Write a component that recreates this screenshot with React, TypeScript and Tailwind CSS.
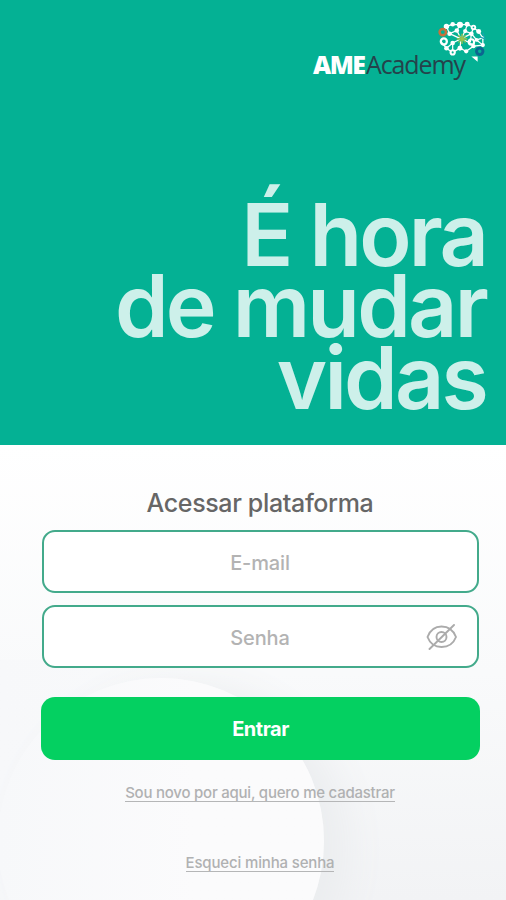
import { useState } from "react";

const dots = [
  [11, 5, 2.6], [17, 3, 2.2], [24, 3.5, 3], [31, 3, 2.4], [37, 6, 2.6], [42, 10, 2.4], [21, 9, 2.2],
  [14, 12, 2.2], [29, 9.5, 2], [35, 12, 2.2], [46, 16, 1.6], [11, 26, 2.2], [17, 30, 3], [17, 21, 2.2],
  [24, 26, 2.4], [30, 29, 2], [37, 24, 2], [46, 23, 2], [40, 18, 1.8],
];

function BrainLogo() {
  return (
    <svg className="absolute left-[134px] top-0 h-[42px] w-[52px]" viewBox="0 0 50 40" fill="none">
      <path
        d="M11 5l6-2 7 .5 7-.5 6 3 5 4 4 6v7l-9 1-7 5-6-3-7 4-6-4-5-6M11 5l3 7 7-3 3-5.500M21 9l4 8 4-7.500 2-6.500M29 9.500l6 2.500 2-6M14 12l11 5-8 4-6 5M35 12l5 6 6-2M25 17l10-5M25 17l-1 9M25 17l9 4 3 3M17 21v9M40 18l6 5M35 12l-1 8"
        stroke="#fff"
        strokeWidth="1.2"
      />
      {dots.map(([cx, cy, r]) => (
        <circle key={`${cx}-${cy}`} cx={cx} cy={cy} r={r} fill="#fff" />
      ))}
      <circle cx="17" cy="30" r="1" fill="#04b194" />
      <circle cx="37" cy="6" r="0.8" fill="#04b194" />
      <circle cx="8.500" cy="19.500" r="2.900" stroke="#fff" strokeWidth="2.2" />
      <circle cx="35" cy="20" r="2.6" stroke="#fff" strokeWidth="2" />
      <circle cx="7.500" cy="10.500" r="3.1" stroke="#c9703c" strokeWidth="2.4" />
      <path d="M26 12v10M21 17h10M22.500 13.500l7 7M29.500 13.500l-7 7" stroke="#7fbf5a" strokeWidth="1.6" />
      <circle cx="26" cy="17" r="1.8" fill="#9bc34e" />
      <path d="M46 11l2 6-5-2" stroke="#1aa5b0" strokeWidth="1.2" />
      <path d="M35 34l6 0 0 5z" fill="#fff" />
      <circle cx="43" cy="29" r="3.1" stroke="#0c6690" strokeWidth="2.8" />
    </svg>
  );
}

function EyeOff() {
  return (
    <svg className="h-7 w-8" viewBox="0 0 32 28" fill="none" stroke="#ababab" strokeWidth="1.9" strokeLinecap="round">
      <path d="M1.500 15C4 8.500 9 4.500 15.500 4.500S27.500 8.500 30 15c-2.500 6.500-8 10-14.500 10S4 21.500 1.500 15z" />
      <circle cx="15.500" cy="15" r="5" />
      <path d="M3.500 27L28 3" />
    </svg>
  );
}

export default function App() {
  const [visible, setVisible] = useState(false);

  return (
    <div className="flex h-[900px] w-[506px] flex-col overflow-hidden bg-white font-['Inter',sans-serif]">
      <header className="flex h-[445px] shrink-0 flex-col items-end bg-[#04b194]">
        <div className="relative mr-[5px] mt-[21px] h-[62px] w-[200px]">
          <BrainLogo />
          <div className="flex pl-[12px] pt-[26px] font-['Open_Sans',sans-serif] text-[25px] leading-[34px]">
            <span className="w-[53px] whitespace-nowrap font-extrabold tracking-[-1.5px] text-white">AME</span>
            <span className="whitespace-nowrap tracking-[-1.1px] text-[#25424b]">Academy</span>
          </div>
        </div>
        <h1 className="mr-5 mt-[117px] whitespace-nowrap text-right text-[86px] font-semibold leading-[71.4px] tracking-[-2.8px] text-[#cdf0ea]">
          É hora
          <br />
          de mudar
          <br />
          vidas
        </h1>
      </header>

      <main className="relative flex flex-1 flex-col items-center overflow-hidden bg-linear-to-b from-white via-[#f9fafb] to-[#f2f3f5] pl-[14px]">
        <div className="absolute bottom-0 left-0 h-[240px] w-[200px] bg-linear-to-r from-[#f7f8fa] to-transparent" />
        <div className="absolute -left-0.5 top-[233px] size-[326px] rounded-full bg-linear-to-r from-[#f7f8fa] to-[#fbfbfc] to-60% shadow-[24px_8px_40px_#ebedef]" />
        <form className="relative flex w-[440px] flex-col items-center" onSubmit={(e) => e.preventDefault()}>
          <h2 className="mt-[42px] whitespace-nowrap text-[25px] font-medium leading-8 tracking-[-0.35px] text-[#666]">
            Acessar plataforma
          </h2>
          <input
            placeholder="E-mail"
            className="mt-[11px] h-[63px] w-[437px] rounded-[13px] border-2 border-[#43aa8b] bg-white pt-0.5 text-center text-xl font-medium tracking-[-0.15px] text-[#666] placeholder:text-[#b3b3b3]"
          />
          <div className="relative mt-3">
            <input
              type={visible ? "text" : "password"}
              placeholder="Senha"
              className="block h-[63px] w-[437px] rounded-[13px] border-2 border-[#43aa8b] bg-white pt-0.5 text-center text-xl font-medium tracking-[-0.15px] text-[#666] placeholder:text-[#b3b3b3]"
            />
            <button type="button" className="absolute right-[21px] top-[17px]" onClick={() => setVisible(!visible)}>
              <EyeOff />
            </button>
          </div>
          <button className="ml-px mt-[29px] h-[63px] w-[439px] rounded-[14px] bg-[#04d061] text-xl font-bold tracking-[-0.5px] text-white">
            Entrar
          </button>
        </form>
        <a
          href="#"
          className="relative mt-[23px] h-[19px] whitespace-nowrap border-b border-[#b5b6b7] text-[15px] font-medium leading-5 tracking-[-0.23px] text-[#b0b1b2]"
        >
          Sou novo por aqui, quero me cadastrar
        </a>
        <a
          href="#"
          className="relative mt-[51px] h-[19px] whitespace-nowrap border-b border-[#b5b6b7] text-[15px] font-medium leading-5 tracking-[-0.15px] text-[#b0b1b2]"
        >
          Esqueci minha senha
        </a>
      </main>
    </div>
  );
}
